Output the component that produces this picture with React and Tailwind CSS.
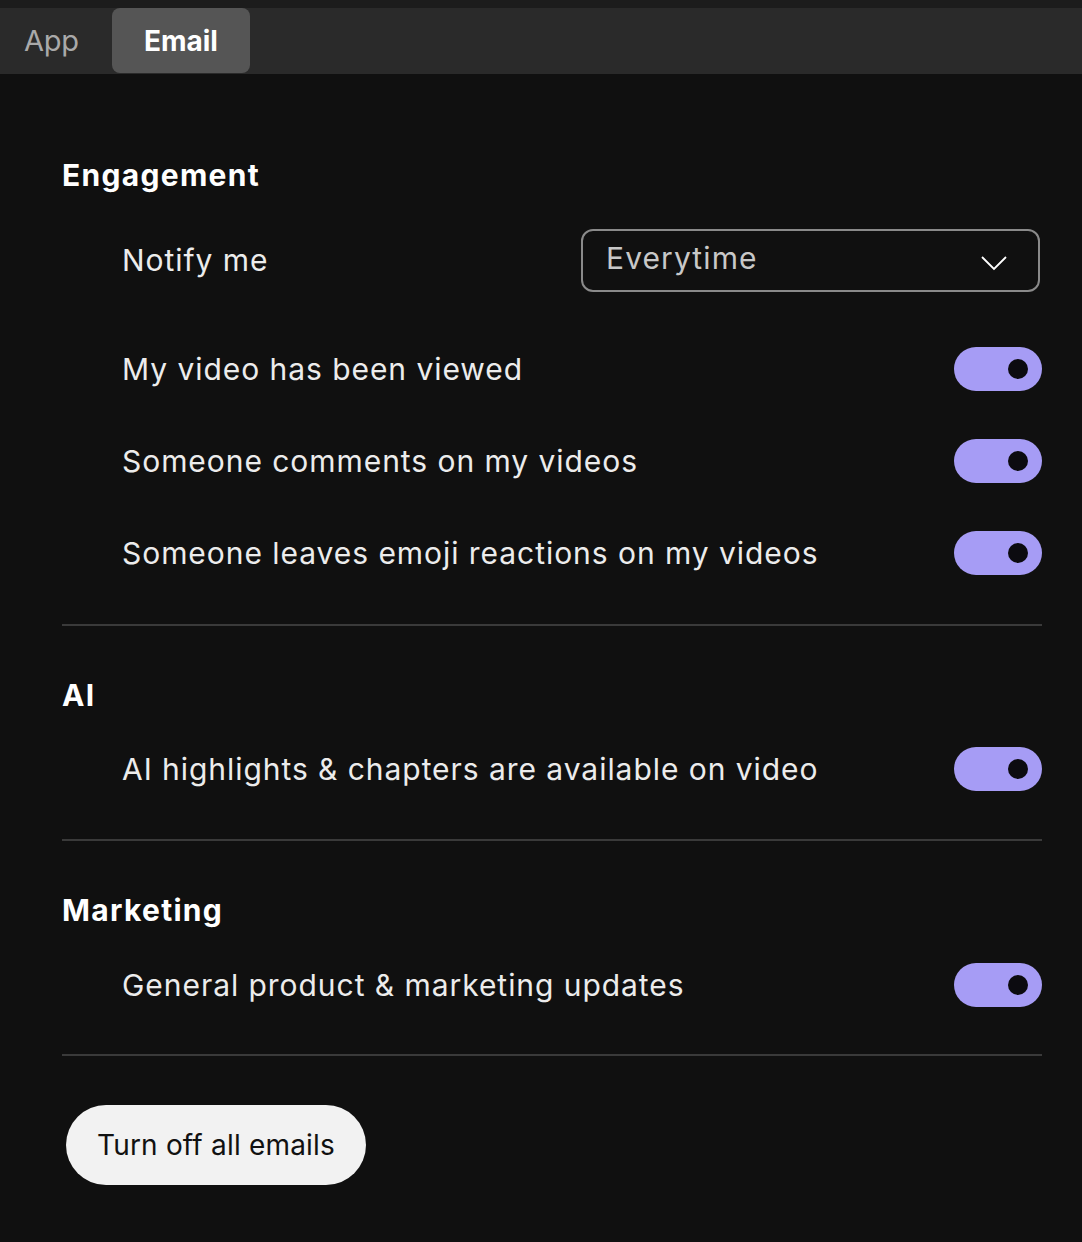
const font = { fontFamily: 'Inter, "Noto Sans", sans-serif' };

function Toggle() {
    return (
        <div className="w-[88px] h-[44px] rounded-full bg-[#a69cf5] flex items-center justify-end pr-[14px] shrink-0">
            <div className="w-[20px] h-[20px] rounded-full bg-[#0c0b10]" />
        </div>
    );
}

function Row({ label }) {
    return (
        <div className="flex items-center justify-between h-[44px] pl-[60px]">
            <span className="text-[30px] text-[#ececec] tracking-[0.95px]">{label}</span>
            <Toggle />
        </div>
    );
}

function Heading({ children }) {
    return <h2 className="h-[50px] flex items-center text-[30px] font-bold text-white tracking-[1.3px]">{children}</h2>;
}

export default function App() {
    return (
        <div className="w-[1082px] h-[1242px] bg-[#101010]" style={font}>
            {/* Tabs */}
            <div className="bg-[#1c1c1c] pt-[8px]">
                <div className="h-[66px] bg-[#2a2a2a] flex items-stretch">
                    <button className="pl-[24px] pr-[23px] text-[29px] text-[#a9a9a9] tracking-[-0.2px]">App</button>
                    <button className="ml-[10px] w-[138px] mb-[1px] rounded-[8px] bg-[#555555] text-[28px] font-bold text-white">
                        Email
                    </button>
                </div>
            </div>

            <div className="pl-[62px] pr-[40px]">
                {/* Engagement */}
                <section className="pt-[76px] pb-[49px] border-b-2 border-[#3a3a3a]">
                    <Heading>Engagement</Heading>
                    <div className="mt-[29px] flex flex-col gap-[48px]">
                        <div className="flex items-center justify-between h-[62px] pl-[60px] mb-[8px]">
                            <span className="text-[30px] text-[#ececec] tracking-[0.95px]">Notify me</span>
                            <div className="w-[459px] h-[63px] mr-[2px] rounded-[12px] border-2 border-[#8a8a8a] flex items-center justify-between pl-[23px] pr-[31px]">
                                <span className="text-[30px] text-[#c8c8c8] tracking-[1.1px] -mt-[4px]">Everytime</span>
                                <svg width="26" height="15" viewBox="0 0 26 15" fill="none" className="mt-[7px]">
                                    <polyline points="1,1 13,13 25,1" stroke="white" strokeWidth="1.8" />
                                </svg>
                            </div>
                        </div>
                        <Row label="My video has been viewed" />
                        <Row label="Someone comments on my videos" />
                        <Row label="Someone leaves emoji reactions on my videos" />
                    </div>
                </section>

                {/* AI */}
                <section className="pt-[44px] pb-[48px] border-b-2 border-[#3a3a3a]">
                    <Heading>AI</Heading>
                    <div className="mt-[27px]">
                        <Row label="AI highlights & chapters are available on video" />
                    </div>
                </section>

                {/* Marketing */}
                <section className="pt-[44px] pb-[47px] border-b-2 border-[#3a3a3a]">
                    <Heading>Marketing</Heading>
                    <div className="mt-[28px]">
                        <Row label="General product & marketing updates" />
                    </div>
                </section>

                <button className="mt-[49px] ml-[4px] w-[300px] h-[80px] rounded-full bg-[#f2f2f2] text-[28px] text-[#111111] tracking-[0.2px]">
                    Turn off all emails
                </button>
            </div>
        </div>
    );
}
